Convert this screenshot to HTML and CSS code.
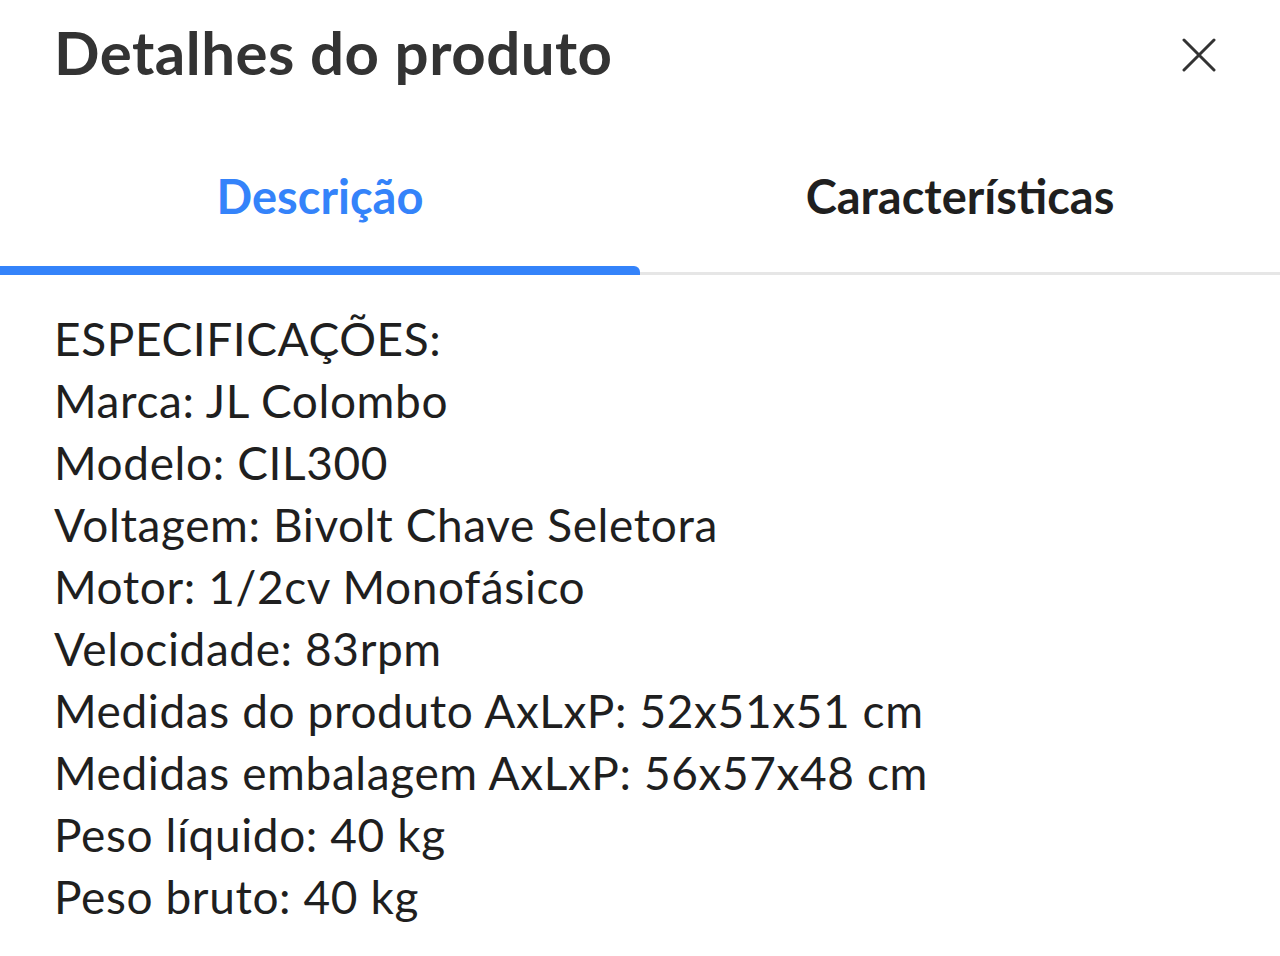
FILE: index.html
```html
<!DOCTYPE html>
<html lang="pt-BR">
<head>
<meta charset="utf-8">
<title>Detalhes do produto</title>
<link rel="stylesheet" href="styles.css">
</head>
<body>
<div class="sheet">
  <header class="header">
    <h1 class="title">Detalhes do produto</h1>
    <button class="close" aria-label="Fechar">
      <svg width="34" height="34" viewBox="0 0 34 34"><path d="M2 2 L32 32 M32 2 L2 32" stroke="#333" stroke-width="3" fill="none" stroke-linecap="round"/></svg>
    </button>
  </header>
  <nav class="tabs">
    <div class="tab active">Descrição</div>
    <div class="tab">Características</div>
  </nav>
  <section class="content">
    <p>ESPECIFICAÇÕES:</p>
    <p>Marca: JL Colombo</p>
    <p>Modelo: CIL300</p>
    <p>Voltagem: Bivolt Chave Seletora</p>
    <p>Motor: 1/2cv Monofásico</p>
    <p>Velocidade: 83rpm</p>
    <p>Medidas do produto AxLxP: 52x51x51 cm</p>
    <p>Medidas embalagem AxLxP: 56x57x48 cm</p>
    <p>Peso líquido: 40 kg</p>
    <p>Peso bruto: 40 kg</p>
  </section>
</div>
</body>
</html>
```
FILE: styles.css
```css
* { box-sizing: border-box; }
html, body { margin: 0; padding: 0; background: #fff; }
body { font-family: Lato, "Open Sans", sans-serif; color: #1f1f1f; }
.sheet { width: 1280px; height: 956px; overflow: hidden; }
.header {
  display: flex;
  align-items: flex-start;
  justify-content: space-between;
  padding: 22px 64px 0 54px;
  height: 108px;
}
.title {
  margin: 0;
  font-size: 60px;
  line-height: 60px;
  font-weight: 700;
  color: #333;
  letter-spacing: 0.5px;
}
.close {
  border: 0;
  background: none;
  padding: 0;
  width: 34px;
  height: 34px;
  margin-top: 16px;
}
.close svg { display: block; }
.tabs {
  display: flex;
  height: 167px;
  border-bottom: 3px solid #e6e6e6;
}
.tab {
  flex: 1;
  display: flex;
  align-items: flex-start;
  justify-content: center;
  padding-top: 65px;
  font-size: 47px;
  line-height: 47px;
  font-weight: 700;
  color: #1f1f1f;
  position: relative;
}
.tab.active { color: #3483fa; }
.tab.active::after {
  content: "";
  position: absolute;
  left: 0;
  right: 0;
  bottom: -3px;
  height: 9px;
  background: #3483fa;
  border-radius: 0 6px 0 0;
}
.content {
  padding: 33px 54px 0;
}
.content p {
  margin: 0;
  font-size: 46px;
  line-height: 62px;
  letter-spacing: 0.6px;
  color: #1f1f1f;
}
```
